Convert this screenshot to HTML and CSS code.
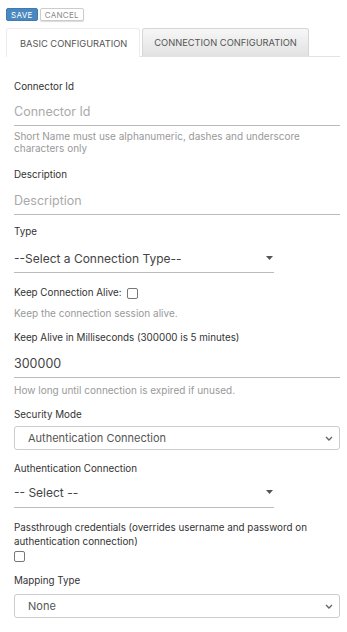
FILE: index.html
```html
<!DOCTYPE html>
<html lang="en">
<head>
  <meta charset="UTF-8">
  <meta name="viewport" content="width=device-width, initial-scale=1.0">
  <title>Connector</title>
  <link rel="stylesheet" href="styles.css">
</head>
<body>
  <div class="toolbar">
    <button class="btn btn-save">Save</button>
    <button class="btn btn-cancel">Cancel</button>
  </div>

  <ul class="tabs">
    <li class="tab tab--active">Basic Configuration</li>
    <li class="tab">Connection Configuration</li>
  </ul>

  <form class="form">
    <label class="label label-first">Connector Id</label>
    <input type="text" class="line-input" placeholder="Connector Id">
    <p class="help help-first">Short Name must use alphanumeric, dashes and underscore characters only</p>

    <label class="label label-desc">Description</label>
    <input type="text" class="line-input line-input-desc" placeholder="Description">

    <label class="label label-type">Type</label>
    <div class="line-select">
      <span>--Select a Connection Type--</span>
      <svg class="caret" width="7" height="4" viewBox="0 0 7 4"><path d="M0 0h7L3.5 4z" fill="#555"/></svg>
    </div>

    <div class="check-row">
      <span class="label">Keep Connection Alive:</span>
      <span class="checkbox"></span>
    </div>
    <p class="help help-alive">Keep the connection session alive.</p>

    <label class="label label-ms">Keep Alive in Milliseconds (300000 is 5 minutes)</label>
    <input type="text" class="line-input line-input-ms" value="300000">
    <p class="help help-expire">How long until connection is expired if unused.</p>

    <label class="label label-security">Security Mode</label>
    <div class="box-select">
      <span>Authentication Connection</span>
      <svg class="chevron" width="8" height="5" viewBox="0 0 8 5"><path d="M1 1l3 3 3-3" fill="none" stroke="#666" stroke-width="1.4"/></svg>
    </div>

    <label class="label label-auth">Authentication Connection</label>
    <div class="line-select line-select-auth">
      <span>-- Select --</span>
      <svg class="caret" width="7" height="4" viewBox="0 0 7 4"><path d="M0 0h7L3.5 4z" fill="#555"/></svg>
    </div>

    <label class="label label-pass">Passthrough credentials (overrides username and password on authentication connection)</label>
    <span class="checkbox checkbox-pass"></span>

    <label class="label label-mapping">Mapping Type</label>
    <div class="box-select box-select-mapping">
      <span>None</span>
      <svg class="chevron" width="8" height="5" viewBox="0 0 8 5"><path d="M1 1l3 3 3-3" fill="none" stroke="#666" stroke-width="1.4"/></svg>
    </div>
  </form>
</body>
</html>
```

FILE: styles.css
```css
body {
  font-family: "Inter", "Open Sans", sans-serif;
  margin: 0;
  padding: 8px 7px 0 6px;
  background: #fff;
  color: #444;
}
.toolbar {
  display: flex;
  gap: 2px;
  height: 13px;
}
.btn {
  font-family: inherit;
  font-size: 8px;
  text-transform: uppercase;
  letter-spacing: 0.3px;
  height: 13px;
  padding: 0 4px;
  border-radius: 2px;
  cursor: pointer;
}
.btn-save {
  background-color: #4a88c0;
  border: 1px solid #3f7bb0;
  color: #fff;
}
.btn-cancel {
  background-color: #fff;
  border: 1px solid #ccc;
  color: #888;
  box-shadow: 0 1px 1px rgba(0,0,0,0.15);
}
.tabs {
  display: flex;
  list-style: none;
  margin: 7px 0 0;
  padding: 0;
  border-bottom: 1px solid #e3e3e3;
}
.tab {
  height: 27px;
  display: flex;
  align-items: center;
  padding: 0 11px;
  font-size: 9.3px;
  text-transform: uppercase;
  color: #555;
  border: 1px solid #d6d6d6;
  border-bottom: none;
  border-radius: 3px 3px 0 0;
  background: linear-gradient(#f7f7f7, #e2e2e2);
  margin-right: 2px;
  margin-bottom: -1px;
}
.tab--active {
  background: #fff;
  border-color: #ececec;
  height: 28px;
  padding: 0 12px 0 13px;
}
.form {
  display: flex;
  flex-direction: column;
  align-items: flex-start;
  padding: 0 0 0 8px;
}
.label {
  display: block;
  font-size: 9.8px;
  line-height: 12px;
  color: #333;
}
.help {
  margin: 0;
  font-size: 10px;
  line-height: 12px;
  color: #999;
}
.line-input {
  font-family: inherit;
  font-size: 12.5px;
  color: #555;
  width: 100%;
  box-sizing: content-box;
  height: 20px;
  padding: 0 0 4px;
  border: none;
  border-bottom: 1px solid #bbb;
  outline: none;
  background: transparent;
}
.line-input::placeholder {
  color: #aaa;
}
.line-select {
  display: flex;
  align-items: center;
  justify-content: space-between;
  width: 260px;
  height: 20px;
  padding: 0 0 4px;
  margin-top: 10px;
  border-bottom: 1px solid #bbb;
  font-size: 12px;
  color: #444;
}
.line-select .caret {
  margin-right: 1px;
}
.box-select {
  box-sizing: border-box;
  display: flex;
  align-items: center;
  justify-content: space-between;
  width: 100%;
  height: 24px;
  padding: 0 6px 0 13px;
  border: 1px solid #ccc;
  border-radius: 3px;
  font-size: 11px;
  color: #555;
}
.checkbox {
  display: inline-block;
  width: 9px;
  height: 9px;
  border: 1px solid #777;
  border-radius: 2px;
}
.check-row {
  display: flex;
  align-items: center;
  gap: 5px;
  margin-top: 14px;
}
.label-first { margin-top: 24px; }
.line-input { margin-top: 8px; }
.help-first { margin-top: 4px; }
.label-desc { margin-top: 15px; }
.line-input-desc { margin-top: 9px; }
.label-type { margin-top: 11px; }
.help-alive { margin-top: 8px; }
.label-ms { margin-top: 13px; }
.line-input-ms { margin-top: 9px; color: #444; }
.help-expire { margin-top: 6px; }
.label-security { margin-top: 13px; }
.box-select { margin-top: 5px; }
.label-auth { margin-top: 13px; }
.line-select-auth { margin-top: 7px; padding-bottom: 5px; }
.label-pass { margin-top: 13px; line-height: 14px; }
.checkbox-pass { margin-top: 2px; }
.label-mapping { margin-top: 13px; }
.box-select-mapping { margin-top: 7px; }
```
